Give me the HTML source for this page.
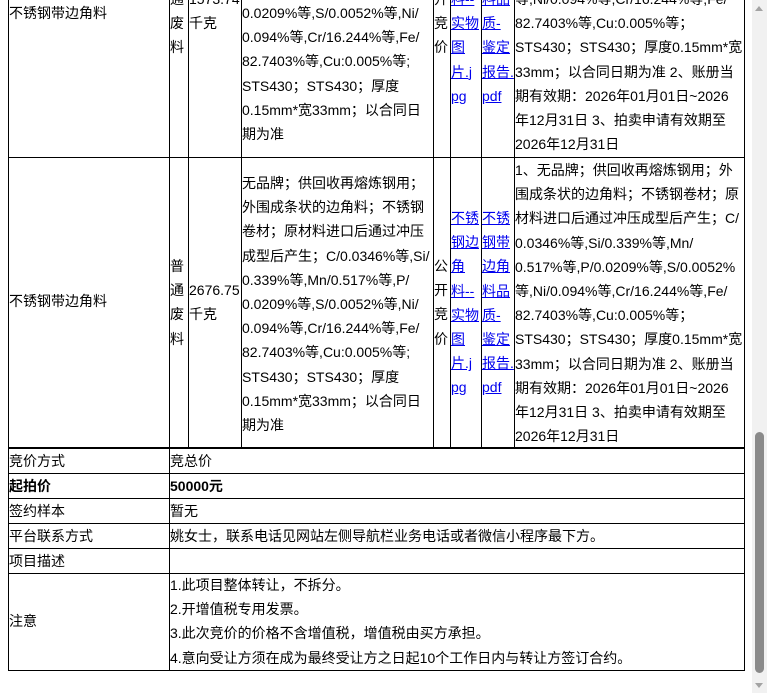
<!DOCTYPE html>
<html><head><meta charset="utf-8"><style>
html,body{margin:0;padding:0;width:767px;height:693px;overflow:hidden;background:#fff;position:relative}
body{font-family:"Liberation Sans","Noto Sans CJK SC",sans-serif;font-size:14px;color:#000}
.c{position:absolute;border:1px solid #000;box-sizing:border-box}
.t{position:absolute;line-height:24.2px;white-space:nowrap}
a{color:#0000ee;text-decoration:underline}
.h{position:absolute;background:#000}
</style></head><body>
<div class="c" style="left:8px;top:-200px;width:162px;height:358px"></div>
<div class="c" style="left:169px;top:-200px;width:20px;height:358px"></div>
<div class="c" style="left:188px;top:-200px;width:54px;height:358px"></div>
<div class="c" style="left:241px;top:-200px;width:193px;height:358px"></div>
<div class="c" style="left:433px;top:-200px;width:18px;height:358px"></div>
<div class="c" style="left:450px;top:-200px;width:32px;height:358px"></div>
<div class="c" style="left:481px;top:-200px;width:34px;height:358px"></div>
<div class="c" style="left:514px;top:-200px;width:231px;height:358px"></div>
<div class="c" style="left:8px;top:157px;width:162px;height:292px"></div>
<div class="c" style="left:169px;top:157px;width:20px;height:292px"></div>
<div class="c" style="left:188px;top:157px;width:54px;height:292px"></div>
<div class="c" style="left:241px;top:157px;width:193px;height:292px"></div>
<div class="c" style="left:433px;top:157px;width:18px;height:292px"></div>
<div class="c" style="left:450px;top:157px;width:32px;height:292px"></div>
<div class="c" style="left:481px;top:157px;width:34px;height:292px"></div>
<div class="c" style="left:514px;top:157px;width:231px;height:292px"></div>

<div class="t" style="left:9px;top:1px">不锈钢带边角料</div>
<div class="t" style="left:170px;top:-13px">通<br>废<br>料</div>
<div class="t" style="left:189px;top:-13px">1573.74<br>千克</div>
<div class="t" style="left:242px;top:1px">0.0209%等,S/0.0052%等,Ni/<br>0.094%等,Cr/16.244%等,Fe/<br>82.7403%等,Cu:0.005%等;<br>STS430；STS430；厚度<br>0.15mm*宽33mm；以合同日<br>期为准</div>
<div class="t" style="left:434px;top:-13px">开<br>竞<br>价</div>
<div class="t" style="left:451px;top:-13px"><a>料--</a><br><a>实物</a><br><a>图</a><br><a>片.j</a><br><a>pg</a></div>
<div class="t" style="left:482px;top:-13px"><a>料品</a><br><a>质-</a><br><a>鉴定</a><br><a>报告.</a><br><a>pdf</a></div>
<div class="t" style="left:515px;top:-13px">等,Ni/0.094%等,Cr/16.244%等,Fe/<br>82.7403%等,Cu:0.005%等；<br>STS430；STS430；厚度0.15mm*宽<br>33mm；以合同日期为准 2、账册当<br>期有效期：2026年01月01日~2026<br>年12月31日 3、拍卖申请有效期至<br>2026年12月31日</div>

<div class="t" style="left:9px;top:289px">不锈钢带边角料</div>
<div class="t" style="left:170px;top:254px">普<br>通<br>废<br>料</div>
<div class="t" style="left:189px;top:278px">2676.75<br>千克</div>
<div class="t" style="left:242px;top:171px">无品牌；供回收再熔炼钢用；<br>外围成条状的边角料；不锈钢<br>卷材；原材料进口后通过冲压<br>成型后产生；C/0.0346%等,Si/<br>0.339%等,Mn/0.517%等,P/<br>0.0209%等,S/0.0052%等,Ni/<br>0.094%等,Cr/16.244%等,Fe/<br>82.7403%等,Cu:0.005%等;<br>STS430；STS430；厚度<br>0.15mm*宽33mm；以合同日<br>期为准</div>
<div class="t" style="left:434px;top:254px">公<br>开<br>竞<br>价</div>
<div class="t" style="left:451px;top:206px"><a>不锈</a><br><a>钢边</a><br><a>角</a><br><a>料--</a><br><a>实物</a><br><a>图</a><br><a>片.j</a><br><a>pg</a></div>
<div class="t" style="left:482px;top:206px"><a>不锈</a><br><a>钢带</a><br><a>边角</a><br><a>料品</a><br><a>质-</a><br><a>鉴定</a><br><a>报告.</a><br><a>pdf</a></div>
<div class="t" style="left:515px;top:158px">1、无品牌；供回收再熔炼钢用；外<br>围成条状的边角料；不锈钢卷材；原<br>材料进口后通过冲压成型后产生；C/<br>0.0346%等,Si/0.339%等,Mn/<br>0.517%等,P/0.0209%等,S/0.0052%<br>等,Ni/0.094%等,Cr/16.244%等,Fe/<br>82.7403%等,Cu:0.005%等；<br>STS430；STS430；厚度0.15mm*宽<br>33mm；以合同日期为准 2、账册当<br>期有效期：2026年01月01日~2026<br>年12月31日 3、拍卖申请有效期至<br>2026年12月31日</div>

<div class="c" style="left:8px;top:447px;width:737px;height:224px;border-top:2px solid #000"></div>
<div class="h" style="left:169px;top:448px;width:1px;height:222px"></div>
<div class="h" style="left:8px;top:473px;width:737px;height:1px"></div>
<div class="h" style="left:8px;top:498px;width:737px;height:1px"></div>
<div class="h" style="left:8px;top:523px;width:737px;height:1px"></div>
<div class="h" style="left:8px;top:548px;width:737px;height:1px"></div>
<div class="h" style="left:8px;top:573px;width:737px;height:1px"></div>
<div class="t" style="left:9px;top:449px">竞价方式</div>
<div class="t" style="left:170px;top:449px">竞总价</div>
<div class="t" style="left:9px;top:474px;font-weight:bold">起拍价</div>
<div class="t" style="left:170px;top:474px;font-weight:bold">50000元</div>
<div class="t" style="left:9px;top:499px">签约样本</div>
<div class="t" style="left:170px;top:499px">暂无</div>
<div class="t" style="left:9px;top:524px">平台联系方式</div>
<div class="t" style="left:170px;top:524px">姚女士，联系电话见网站左侧导航栏业务电话或者微信小程序最下方。</div>
<div class="t" style="left:9px;top:549px">项目描述</div>
<div class="t" style="left:9px;top:609px">注意</div>
<div class="t" style="left:170px;top:573px">1.此项目整体转让，不拆分。<br>2.开增值税专用发票。<br>3.此次竞价的价格不含增值税，增值税由买方承担。<br>4.意向受让方须在成为最终受让方之日起10个工作日内与转让方签订合约。</div>

<div style="position:absolute;left:752px;top:0;width:15px;height:693px;background:#f1f1f1"></div>
<div style="position:absolute;left:755px;top:432px;width:9px;height:241px;background:#8a8a8a;border-radius:5px"></div>
<div style="position:absolute;left:755px;top:6px;width:0;height:0;border-left:4px solid transparent;border-right:4px solid transparent;border-bottom:5px solid #a3a3a3"></div>
<div style="position:absolute;left:755px;top:683px;width:0;height:0;border-left:4px solid transparent;border-right:4px solid transparent;border-top:5px solid #a3a3a3"></div>
</body></html>
